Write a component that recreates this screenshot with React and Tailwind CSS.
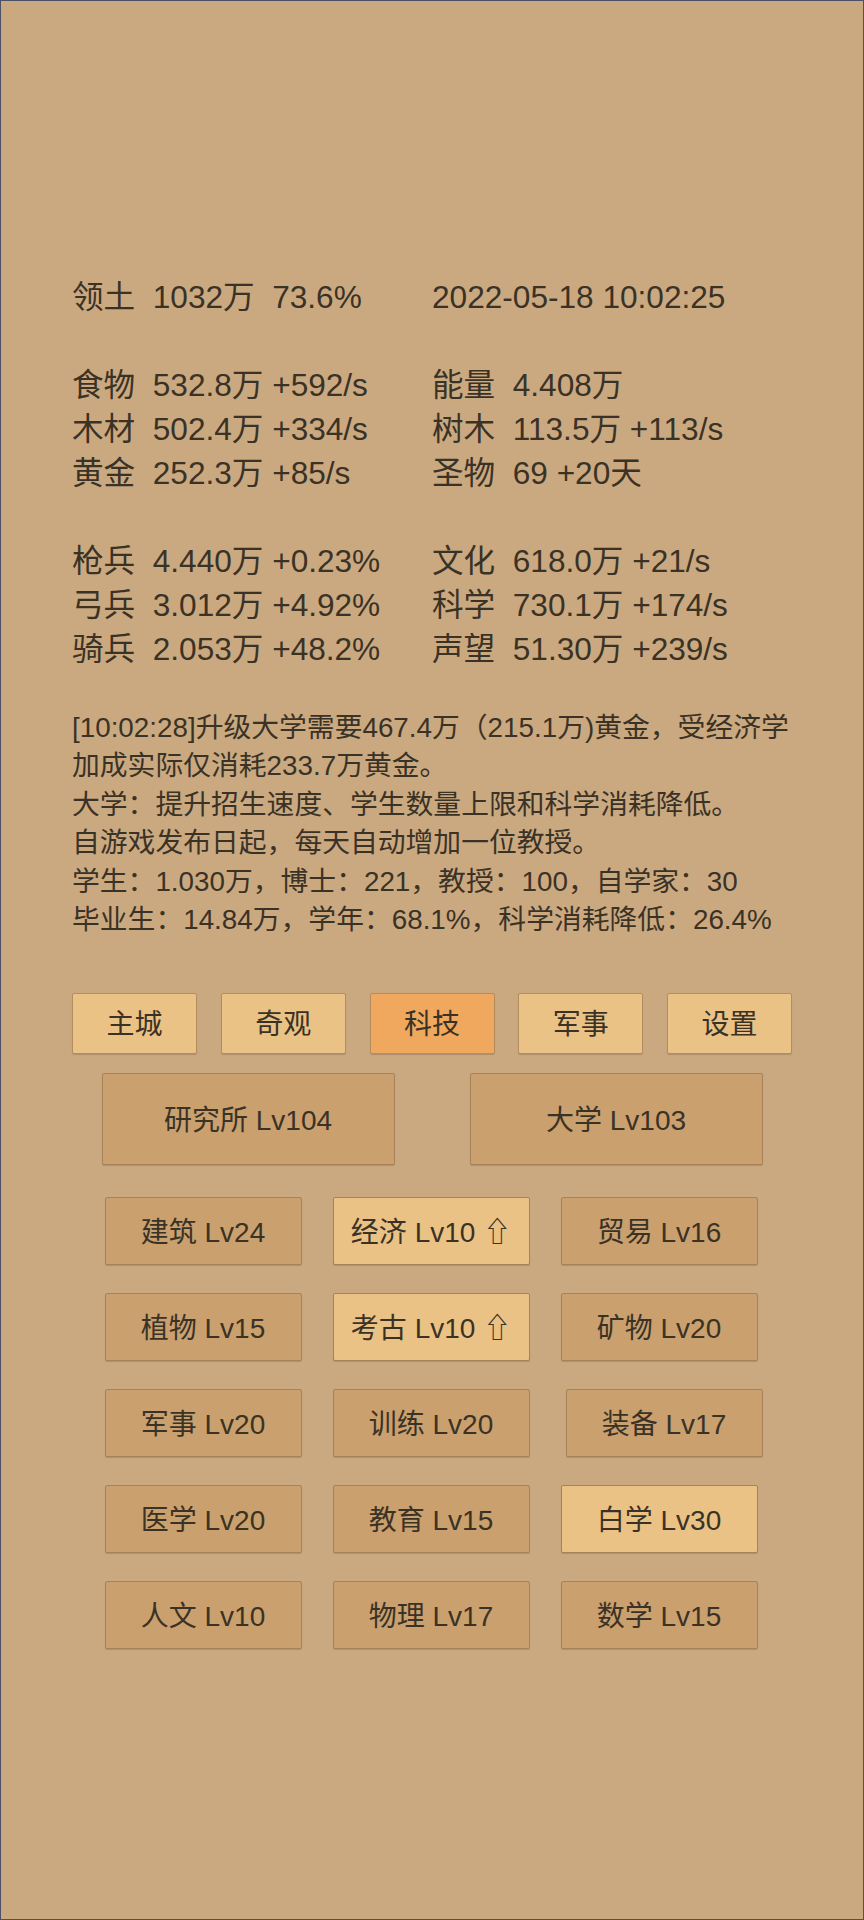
const font = { fontFamily: '"Liberation Sans", "Noto Sans CJK SC", sans-serif' };

const statLines = [
  ["领土  1032万  73.6%", "2022-05-18 10:02:25"],
  ["", ""],
  ["食物  532.8万 +592/s", "能量  4.408万"],
  ["木材  502.4万 +334/s", "树木  113.5万 +113/s"],
  ["黄金  252.3万 +85/s", "圣物  69 +20天"],
  ["", ""],
  ["枪兵  4.440万 +0.23%", "文化  618.0万 +21/s"],
  ["弓兵  3.012万 +4.92%", "科学  730.1万 +174/s"],
  ["骑兵  2.053万 +48.2%", "声望  51.30万 +239/s"],
];

const log = [
  "[10:02:28]升级大学需要467.4万（215.1万)黄金，受经济学",
  "加成实际仅消耗233.7万黄金。",
  "大学：提升招生速度、学生数量上限和科学消耗降低。",
  "自游戏发布日起，每天自动增加一位教授。",
  "学生：1.030万，博士：221，教授：100，自学家：30",
  "毕业生：14.84万，学年：68.1%，科学消耗降低：26.4%",
];

const tabs = ["主城", "奇观", "科技", "军事", "设置"];

const techs = [
  ["建筑 Lv24", false], ["经济 Lv10 ⇧", true], ["贸易 Lv16", false],
  ["植物 Lv15", false], ["考古 Lv10 ⇧", true], ["矿物 Lv20", false],
  ["军事 Lv20", false], ["训练 Lv20", false], ["装备 Lv17", false],
  ["医学 Lv20", false], ["教育 Lv15", false], ["白学 Lv30", true],
  ["人文 Lv10", false], ["物理 Lv17", false], ["数学 Lv15", false],
];

export default function App() {
  return (
    <div
      className="box-border h-[1920px] w-[864px] overflow-hidden border border-[#4b5268] bg-[#caa981] text-[#3b3226]"
      style={font}
    >
      <div className="px-[71px] pt-[274px]">
        <div className="text-[31.6px] leading-[44px]">
          {statLines.map(([a, b], i) => (
            <div key={i} className="grid h-[44px] grid-cols-[360px_360px] whitespace-pre">
              <span>{a}</span>
              <span>{b}</span>
            </div>
          ))}
        </div>

        <div className="mt-[38px] text-[27.8px] leading-[38.4px]">
          {log.map((l, i) => (
            <div key={i} className="whitespace-nowrap">{l}</div>
          ))}
        </div>

        <div className="mt-[54px] flex w-[720px] justify-between">
          {tabs.map((t) => (
            <div
              key={t}
              className={`flex h-[61px] w-[125px] items-center justify-center rounded-[2px] border border-[#b48d5f] pt-[2px] text-[28px] shadow-[0_1px_1px_rgba(0,0,0,0.15)] ${
                t === "科技" ? "bg-[#efa85e]" : "bg-[#ebc285]"
              }`}
            >
              {t}
            </div>
          ))}
        </div>

        <div className="mt-[19px] flex w-[720px] justify-center gap-[75px]">
          {["研究所 Lv104", "大学 Lv103"].map((t) => (
            <div
              key={t}
              className="flex h-[92px] w-[293px] items-center justify-center rounded-[2px] border border-[#a8825a] bg-[#c9a06e] pt-[3px] text-[28px] shadow-[0_1px_1px_rgba(0,0,0,0.15)]"
            >
              {t}
            </div>
          ))}
        </div>

        <div className="mt-[32px] flex w-[720px] justify-center">
          <div className="grid -translate-x-px grid-cols-[197px_197px_197px] gap-x-[31px] gap-y-[28px]">
            {techs.map(([t, hot], i) => (
              <div
                key={i}
                className={`flex h-[68px] w-[197px] items-center justify-center rounded-[2px] border border-[#a8825a] pt-[3px] text-[28px] shadow-[0_1px_1px_rgba(0,0,0,0.15)] ${
                  hot ? "bg-[#ebc285]" : "bg-[#c9a06e]"
                } ${i === 8 ? "translate-x-[5px]" : ""}`}
              >
                {t}
              </div>
            ))}
          </div>
        </div>
      </div>
    </div>
  );
}
